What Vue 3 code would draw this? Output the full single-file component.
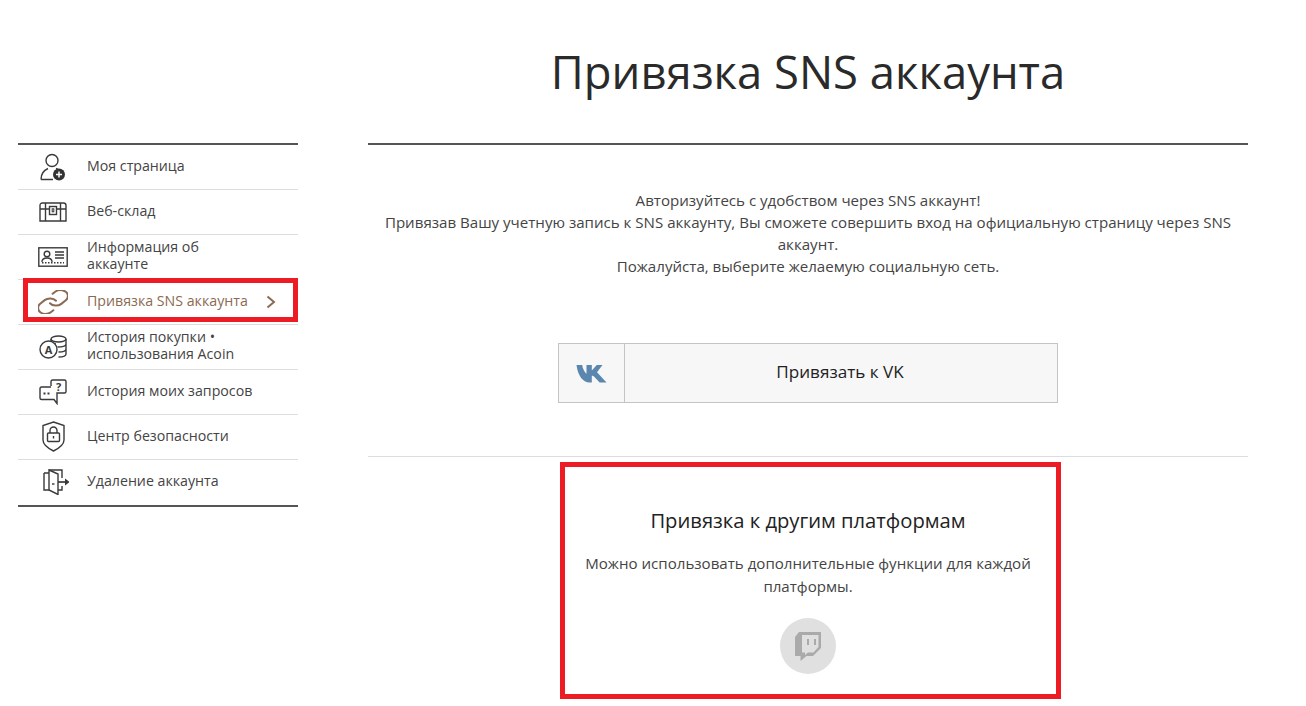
<script setup>
const items = [
  { key: 'user', label: 'Моя страница' },
  { key: 'chest', label: 'Веб-склад' },
  { key: 'card', label: 'Информация об аккаунте' },
  { key: 'link', label: 'Привязка SNS аккаунта', active: true },
  { key: 'coin', label: 'История покупки • использования Acoin' },
  { key: 'chat', label: 'История моих запросов' },
  { key: 'shield', label: 'Центр безопасности' },
  { key: 'door', label: 'Удаление аккаунта' },
]
</script>

<template>
  <div class="page">
    <aside class="side">
      <ul class="menu">
        <li v-for="it in items" :key="it.key" class="row" :class="{ active: it.active }">
          <span class="ico">
            <svg v-if="it.key === 'user'" width="26" height="28" viewBox="0 0 26 28" fill="none" stroke="#3a3a3a" stroke-width="1.400">
              <circle cx="12" cy="7.500" r="6" />
              <path d="M1 26.500c0-6 3.500-9.500 7-11M16 15.500c1 .4 2 1 2.600 1.600M1 26.500H13" />
              <circle cx="19" cy="21.500" r="6" fill="#333" stroke="none" />
              <path d="M16 21.500h6M19 18.500v6" stroke="#fff" stroke-width="1.500" />
            </svg>
            <svg v-else-if="it.key === 'chest'" width="28" height="20" viewBox="0 0 28 20" fill="none" stroke="#3a3a3a" stroke-width="1.400">
              <path d="M1 19V3.500Q1 1 3.500 1h21Q27 1 27 3.500V19zM1 7h9.500M17.500 7H27M6.500 1v18M21.500 1v18" />
              <rect x="10.500" y="4.500" width="7" height="8" />
              <rect x="13.200" y="6.800" width="1.600" height="3" stroke-width="1" />
            </svg>
            <svg v-else-if="it.key === 'card'" width="30" height="20" viewBox="0 0 30 20" fill="none" stroke="#3a3a3a" stroke-width="1.400">
              <rect x=".8" y=".8" width="28.400" height="18.400" />
              <circle cx="9" cy="7" r="2.800" />
              <path d="M3.800 14.800c.5-2.800 2.500-3.800 5.200-3.800s4.700 1 5.200 3.800M17 5h9M17 8h9M17 11h9" />
              <path d="M4 15.800h22" stroke-dasharray="1.500 1.500" />
            </svg>
            <svg v-else-if="it.key === 'link'" width="30" height="24" viewBox="2 2 20 20" preserveAspectRatio="none" fill="none" stroke="#8a6a52" stroke-width="2" stroke-linecap="round">
              <path vector-effect="non-scaling-stroke" d="M10 13a5 5 0 0 0 7.540.54l3-3a5 5 0 0 0-7.070-7.070l-1.720 1.710" />
              <path vector-effect="non-scaling-stroke" d="M14 11a5 5 0 0 0-7.540-.54l-3 3a5 5 0 0 0 7.070 7.070l1.710-1.710" />
            </svg>
            <svg v-else-if="it.key === 'coin'" width="28" height="24" viewBox="0 0 28 24" fill="none" stroke="#3a3a3a" stroke-width="1.400">
              <ellipse cx="19.500" cy="4" rx="7.500" ry="3" />
              <path d="M12 4v5M27 4v15c0 1.600-2.800 3-7.500 3M27 9c0 1.600-2.800 3-8.500 3M27 14c0 1.600-2.800 3-7.500 3M12 8c1.300.6 3 1 5 1" />
              <circle cx="9.500" cy="14.500" r="8.500" fill="#fff" />
              <text x="9.500" y="18.500" class="icon-a">A</text>
            </svg>
            <svg v-else-if="it.key === 'chat'" width="28" height="26" viewBox="0 0 28 26" fill="none" stroke="#3a3a3a" stroke-width="1.400">
              <path d="M12 7V2.500Q12 1 13.500 1h12Q27 1 27 2.500v10Q27 14 25.500 14H18v5" />
              <path d="M12 8H2.500Q1 8 1 9.500V19q0 1.500 1.500 1.500H15l3 4V19" />
              <path d="M4.500 14.500h2M8.500 14.500h2" stroke-width="1.800" />
              <text x="19.500" y="11.500" class="icon-q">?</text>
            </svg>
            <svg v-else-if="it.key === 'shield'" width="23" height="31" viewBox="0 0 23 31" fill="none" stroke="#3a3a3a" stroke-width="1.400">
              <path d="M11.500 1 22 4.500V19c0 5-5.500 8.500-10.500 11C6.500 27.500 1 24 1 19V4.500z" />
              <rect x="5.500" y="12" width="12" height="8.500" rx="1" />
              <path d="M8 12V9.500a3.500 3.500 0 0 1 7 0V12M11.500 15v2.500" />
            </svg>
            <svg v-else width="32" height="26" viewBox="-6 0 32 26" fill="none" stroke="#3a3a3a" stroke-width="1.400">
              <path d="M6 1H19V9M19 17V21H15M1 4H6M1 4V21H6" />
              <path d="M6 1 15 5V25.500L6 21z" />
              <path d="M9 15h2.500" />
              <path d="M15 13h7" stroke-width="1.700" />
              <path d="M22 9.500l4.500 3.500-4.500 3.500z" fill="#3a3a3a" stroke="none" />
            </svg>
          </span>
          <span class="label">{{ it.label }}</span>
          <svg v-if="it.active" class="chev" width="10" height="14" viewBox="0 0 10 14" fill="none" stroke="#8a6a52" stroke-width="2">
            <path d="M1.500 1.500 8 7l-6.500 5.500" />
          </svg>
        </li>
      </ul>
    </aside>

    <main class="main">
      <h1 class="title">Привязка SNS аккаунта</h1>
      <p class="intro">
        Авторизуйтесь с удобством через SNS аккаунт!<br />
        Привязав Вашу учетную запись к SNS аккаунту, Вы сможете совершить вход на официальную страницу через SNS аккаунт.<br />
        Пожалуйста, выберите желаемую социальную сеть.
      </p>
      <div class="vk">
        <span class="vk-ico">
          <svg width="31" height="19" viewBox="0 0 31 19">
            <path fill="#5b86ae" d="M0.500 1H6.200C6.600 4.500 8.500 8.200 10.500 9.800V1H15.800V6.500L20.800 1H26.500L21 8.200 30.500 18.500H23.700L18 12.500C17 11.800 16.500 11.800 15.800 11.800V18.500H13.500C7 18.500 2 12 0.500 1Z" />
          </svg>
        </span>
        <span class="vk-text">Привязать к VK</span>
      </div>
      <div class="divider"></div>
      <section class="other">
        <h2 class="other-title">Привязка к другим платформам</h2>
        <p class="other-text">Можно использовать дополнительные функции для каждой платформы.</p>
        <span class="twitch">
          <svg width="26" height="29" viewBox="0 0 26 29">
            <path fill="#aaa" fill-rule="evenodd" d="M4 0H26V16L18 24H11.500L5.500 29V24H0V5ZM7 3V20.500H10V23L13 20.500H18.500L23.500 15V3Z" />
            <path fill="#aaa" d="M12 7H14V13H12ZM19 7H21V13H19Z" />
          </svg>
        </span>
      </section>
    </main>
  </div>
</template>

<style>
html, body { margin: 0; background: #fff; }
</style>

<style scoped>
.page {
  display: flex;
  gap: 70px;
  padding-left: 18px;
  height: 706px;
  overflow: hidden;
  box-sizing: border-box;
  font-family: "Open Sans", "Liberation Sans", sans-serif;
  color: #333;
}
.side { width: 280px; flex: none; padding-top: 143px; }
.menu {
  list-style: none;
  margin: 0;
  padding: 0;
  border-top: 2px solid #555;
  border-bottom: 2px solid #555;
}
.row {
  height: 45px;
  box-sizing: border-box;
  display: flex;
  align-items: center;
  border-bottom: 1px solid #ddd;
  padding-bottom: 1px;
  position: relative;
  color: #444;
}
.row:last-child { border-bottom: 0; }
.ico { width: 69px; flex: none; display: flex; justify-content: center; padding-left: 1px; box-sizing: border-box; }
.label { font-size: 14.200px; line-height: 17px; width: 170px; padding-bottom: 3px; }
.active { color: #8a6a52; }
.active::after {
  content: "";
  position: absolute;
  left: 5px;
  right: 0;
  top: -2px;
  height: 44px;
  border: 5px solid #ed1c24;
  box-sizing: border-box;
  pointer-events: none;
}
.active .label { white-space: nowrap; }
.chev { position: absolute; left: 248px; top: 15px; }
.icon-a { font: 700 11px "Open Sans", sans-serif; fill: #3a3a3a; stroke: none; text-anchor: middle; }
.icon-q { font: 700 11px "Open Sans", sans-serif; fill: #3a3a3a; stroke: none; text-anchor: middle; }
.main { width: 880px; flex: none; text-align: center; }
.title {
  margin: 0;
  height: 103px;
  padding-top: 40px;
  border-bottom: 2px solid #555;
  font-size: 45.400px;
  font-weight: 400;
  line-height: 63px;
  color: #2a2a2a;
}
.intro {
  margin: 44px 0 0;
  font-size: 15.100px;
  line-height: 22px;
  color: #444;
}
.vk {
  margin: 66px auto 0;
  width: 500px;
  height: 60px;
  box-sizing: border-box;
  display: flex;
  border: 1px solid #c4c4c4;
  background: #f7f7f7;
}
.vk-ico {
  width: 66px;
  flex: none;
  box-sizing: border-box;
  border-right: 1px solid #c4c4c4;
  display: flex;
  align-items: center;
  justify-content: center;
}
.vk-text {
  flex: 1;
  font-size: 17.100px;
  line-height: 56px;
  color: #222;
  padding-right: 2px;
}
.divider { margin-top: 53px; border-top: 1px solid #ddd; }
.other {
  margin: 5px 0 0 192px;
  width: 501px;
  height: 237px;
  box-sizing: border-box;
  border: 5px solid #ed1c24;
  padding: 39px 20px 0 15px;
}
.other-title {
  margin: 0;
  font-size: 20.200px;
  font-weight: 400;
  line-height: 28px;
  color: #222;
}
.other-text {
  margin: 18px 0 0;
  font-size: 15.100px;
  line-height: 23px;
  color: #444;
}
.twitch {
  margin: 20px auto 0;
  width: 56px;
  height: 56px;
  border-radius: 50%;
  background: #e0e0e0;
  display: flex;
  align-items: center;
  justify-content: center;
}
</style>
